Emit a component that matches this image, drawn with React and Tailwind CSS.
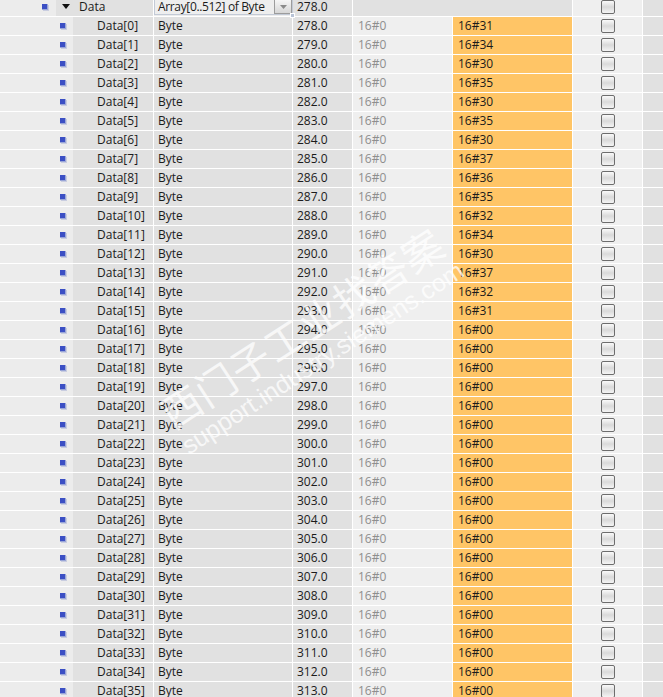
import React from "react";

const mon = ["31","34","30","35","30","35","30","37","36","35","32","34","30","37","32","31"];

function Bullet() {
  return (
    <div className="w-[6px] h-[6px] bg-[#3b4fc4] border-r border-b border-[#9aa6d8] shadow-[1px_1px_0_#c9cde0]" />
  );
}

function Checkbox() {
  return (
    <div className="w-[14px] h-[14px] rounded-[2px] border-[1.5px] border-[#6d6d6d] bg-gradient-to-b from-[#fafafa] via-[#d9d9d9] to-[#f4f4f4]" />
  );
}

export default function App() {
  const rows = Array.from({ length: 36 }, (_, i) => i);
  return (
    <div
      className="relative w-[663px] h-[697px] overflow-hidden bg-[#ececec] text-[12px] leading-[18px] text-[#1b1b1b]"
      style={{ fontFamily: '"Open Sans", "Noto Sans CJK SC", sans-serif' }}
    >
      <div className="mt-[-2px] flex flex-col">
        {/* header row */}
        <div className="flex h-[19px] border-b border-white">
          <div className="w-[56px] h-[18px] flex items-center justify-end pr-[8px] bg-[#ececec]">
            <Bullet />
          </div>
          <div className="w-[98px] h-[18px] flex items-center bg-[#e1e1e1] border-r border-white">
            <svg width="8" height="6" viewBox="0 0 8 6" className="ml-[6px]">
              <path d="M0 0 L8 0 L4 5 Z" fill="#111" />
            </svg>
            <span className="ml-[9px]">Data</span>
          </div>
          <div className="relative w-[139px] h-[18px] border-r border-white">
            <div className="absolute left-0 top-[0px] w-[139px] h-[17px] border border-[#c3cad6] bg-[#eeeeee] flex items-center">
              <span className="pl-[3px] flex-1 whitespace-nowrap text-[12px] tracking-[-0.35px]">Array[0..512] of Byte</span>
              <div className="w-[18px] h-[15px] border border-[#9c9c9c] bg-gradient-to-b from-[#f6f6f6] to-[#d6d6d6] flex items-center justify-center">
                <svg width="7" height="4" viewBox="0 0 7 4"><path d="M0 0 L7 0 L3.5 4 Z" fill="#8a8a8a" /></svg>
              </div>
            </div>
            <div className="absolute right-[-3px] bottom-[-2px] w-[5px] h-[5px] bg-[#b8c3d6] border border-white" />
          </div>
          <div className="w-[60px] h-[18px] bg-[#e1e1e1] border-r border-white pl-[4px]">278.0</div>
          <div className="w-[100px] h-[18px] bg-[#e1e1e1]" />
          <div className="w-[120px] h-[18px] bg-[#e1e1e1] border-r border-white" />
          <div className="w-[70px] h-[18px] bg-[#efefef] border-r border-white flex items-center justify-center">
            <Checkbox />
          </div>
          <div className="flex-1 h-[18px] bg-[#e1e1e1]" />
        </div>
        {rows.map((i) => (
          <div key={i} className="flex h-[19px] border-b border-white">
            <div className="w-[73px] h-[18px] flex items-center justify-end pr-[7px] bg-[#ececec]">
              <Bullet />
            </div>
            <div className="w-[81px] h-[18px] bg-[#e1e1e1] border-r border-white pl-[24px] whitespace-nowrap">
              Data[{i}]
            </div>
            <div className="w-[139px] h-[18px] bg-[#e1e1e1] border-r border-white pl-[4px]">Byte</div>
            <div className="w-[60px] h-[18px] bg-[#e1e1e1] border-r border-white pl-[4px]">{(278 + i).toFixed(1)}</div>
            <div className="w-[100px] h-[18px] bg-[#efefef] border-r border-white pl-[5px] text-[#8e8e8e]">16#0</div>
            <div className="w-[120px] h-[18px] bg-[#ffc566] border-r border-white pl-[5px]">
              16#{i < 16 ? mon[i] : "00"}
            </div>
            <div className="w-[70px] h-[18px] bg-[#efefef] border-r border-white flex items-center justify-center">
              <Checkbox />
            </div>
            <div className="flex-1 h-[18px] bg-[#e1e1e1]" />
          </div>
        ))}
      </div>

      {/* watermark */}
      <div className="pointer-events-none absolute left-[140px] top-[285px] w-[390px] origin-center -rotate-[33deg] text-white/75 select-none">
        <div className="text-[40px] leading-[46px] tracking-[1px] whitespace-nowrap" style={{ fontFamily: '"Noto Sans CJK SC", sans-serif' }}>
          西门子工业找答案
        </div>
        <div className="text-[25px] leading-[28px] whitespace-nowrap" style={{ fontFamily: '"Liberation Sans", sans-serif' }}>
          support.industry.siemens.com
        </div>
      </div>
    </div>
  );
}
